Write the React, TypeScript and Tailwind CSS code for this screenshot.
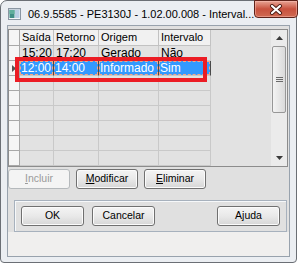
import React from "react";

const widths = ["w-[34px]", "w-[45px]", "w-[60px]", "w-[52px]"];

type RowProps = { cells?: string[]; header?: boolean; selected?: boolean; indicator?: boolean };

function Row({ cells = ["", "", "", ""], header, selected, indicator }: RowProps) {
  return (
    <div className={`flex ${header ? "h-[16px]" : "h-[15px]"}`}>
      <div className="w-[11px] shrink-0 border-r border-b border-[#a8a8a8] bg-[#f5f5f5] flex items-center justify-center">
        {indicator && (
          <svg width="4" height="7" viewBox="0 0 4 7">
            <path d="M0 0 L4 3.5 L0 7Z" fill="#555" />
          </svg>
        )}
      </div>
      {widths.map((w, i) => (
        <div
          key={i}
          className={`${w} shrink-0 border-b flex items-center overflow-hidden whitespace-nowrap ${
            header
              ? "bg-[#f1f1f1] border-r border-[#c2c2c2] text-[11px] text-black pl-[2px]"
              : selected
              ? "bg-[#3399ff] border-r border-r-[#4a4a4a] border-b-[#c8c8c8] text-white text-[12px]"
              : "border-r border-[#c9c9c9] text-[12px] text-black pl-[2px]"
          }`}
        >
          {selected ? (
            <span className="h-full w-full flex items-center pl-[1px] outline-1 outline-dashed outline-[#f4a487] -outline-offset-1">
              {cells[i]}
            </span>
          ) : (
            cells[i]
          )}
        </div>
      ))}
      <div className="flex-1" />
    </div>
  );
}

function Btn({ children, className = "", disabled }: { children: React.ReactNode; className?: string; disabled?: boolean }) {
  return (
    <div
      className={`h-[20px] shrink-0 rounded-[3px] border flex items-center justify-center text-[10.5px] ${
        disabled
          ? "border-[#b5b9bc] bg-[#f4f4f4] text-[#9a9a9a]"
          : "border-[#707070] bg-linear-to-b from-[#f4f4f4] via-[#e9e9e9] to-[#d6d6d6] text-black shadow-[inset_0_0_0_1px_#fbfbfb]"
      } ${className}`}
    >
      {children}
    </div>
  );
}

export default function App() {
  return (
    <div className="w-[300px] h-[267px] bg-white overflow-hidden font-['Liberation_Sans',Arial,sans-serif] relative">
      <div className="w-[297px] h-[263px] rounded-t-[7px] rounded-b-[4px] border border-[#6b6f75] bg-[#ebeef2] flex flex-col">
        {/* title bar */}
        <div className="h-[24px] flex items-start shrink-0">
          <svg className="ml-[7px] mt-[7px] shrink-0" width="13" height="12" viewBox="0 0 13 12">
            <rect x="0.5" y="0.5" width="12" height="11" fill="#f4f6f8" stroke="#8a96a2" />
            <rect x="1.5" y="2" width="5" height="8" fill="#3f8f86" />
            <rect x="1.5" y="2" width="5" height="4" fill="#5fae9c" />
            <rect x="7" y="2" width="4.5" height="8" fill="#b9cfe4" />
            <rect x="1" y="1" width="11" height="1" fill="#c8d2dc" />
          </svg>
          <div className="ml-[7px] mt-[6px] text-[11px] leading-[14px] text-black whitespace-nowrap">
            06.9.5585 - PE3130J - 1.02.00.008 - Interval...
          </div>
          <div className="ml-auto mr-[3px] -mt-px w-[44px] h-[18px] shrink-0 rounded-b-[4px] border border-[#5e2219] bg-linear-to-b from-[#e7a394] via-[#c8513e] to-[#cf6a52] flex items-center justify-center shadow-[inset_0_0_0_1px_rgba(255,200,190,0.45)]">
            <svg width="14" height="11" viewBox="0 0 14 11">
              <path d="M3 2 L11 9 M11 2 L3 9" stroke="#4a1a12" strokeWidth="4" strokeLinecap="round" />
              <path d="M3 2 L11 9 M11 2 L3 9" stroke="#ffffff" strokeWidth="2.2" strokeLinecap="round" />
            </svg>
          </div>
        </div>

        {/* client */}
        <div className="mx-[6px] h-[232px] border border-[#98a2ad] flex flex-col shrink-0">
          <div className="bg-[#e0e0e0] flex flex-col pt-[3px]">
            {/* grid */}
            <div className="h-[138px] mr-[1px] border border-[#8c8c8c] bg-[#e2e2e2] flex">
              <div className="flex-1 flex flex-col">
                <Row header cells={["Saída", "Retorno", "Origem", "Intervalo"]} />
                <Row cells={["15:20", "17:20", "Gerado", "Não"]} />
                <Row selected indicator cells={["12:00", "14:00", "Informado", "Sim"]} />
                <Row />
                <Row />
                <Row />
                <Row />
                <Row />
                <Row />
              </div>
              <div className="w-[17px] shrink-0 bg-[#ebebeb] border-l border-[#e2e2e2] flex flex-col">
                <div className="h-[16px] flex items-center justify-center">
                  <svg width="7" height="4" viewBox="0 0 7 4">
                    <path d="M3.5 0 L7 4 L0 4Z" fill="#3a3a3a" />
                  </svg>
                </div>
                <div className="mx-[1px] h-[67px] rounded-[2px] border border-[#979797] bg-linear-to-r from-[#f4f4f4] to-[#dadada] flex items-center justify-center">
                  <svg width="7" height="6" viewBox="0 0 7 6">
                    <path d="M0 0.5 H7 M0 2.5 H7 M0 4.5 H7" stroke="#6a6a6a" strokeWidth="1" />
                  </svg>
                </div>
                <div className="flex-1" />
                <div className="h-[16px] flex items-center justify-center">
                  <svg width="7" height="4" viewBox="0 0 7 4">
                    <path d="M0 0 L7 0 L3.5 4Z" fill="#3a3a3a" />
                  </svg>
                </div>
              </div>
            </div>

            {/* action buttons */}
            <div className="mt-[2px] flex gap-[6px]">
              <Btn disabled className="w-[62px]">
                <span><span className="underline">I</span>ncluir</span>
              </Btn>
              <Btn className="w-[62px]">
                <span><span className="underline">M</span>odificar</span>
              </Btn>
              <Btn className="w-[62px]">
                <span><span className="underline">E</span>liminar</span>
              </Btn>
            </div>

            {/* group box */}
            <div className="mt-[11px] ml-[6px] w-[273px] h-[32px] border border-[#a7b1bd] shadow-[inset_1px_1px_0_#f6f8fa] flex items-center px-[6px]">
              <Btn className="w-[63px]">OK</Btn>
              <Btn className="w-[63px] ml-[8px]">Cancelar</Btn>
              <Btn className="w-[63px] ml-auto">Ajuda</Btn>
            </div>
          </div>
          <div className="flex-1 bg-[#f0efee]" />
        </div>
      </div>

      {/* red highlight overlay */}
      <div className="absolute left-[15px] top-[57px] w-[192px] h-[25px] border-4 border-[#ec1c24]" />
    </div>
  );
}
